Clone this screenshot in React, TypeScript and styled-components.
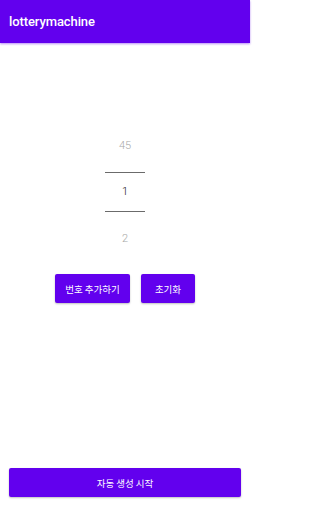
import React from "react";
import styled, { createGlobalStyle } from "styled-components";

const Global = createGlobalStyle`
  html, body { margin: 0; padding: 0; background: #ffffff; }
  body { font-family: Roboto, "Noto Sans CJK KR", sans-serif; }
  #root { width: 250px; height: 512px; }
`;

const Screen = styled.div`
  width: 250px;
  height: 512px;
  display: flex;
  flex-direction: column;
  background: #ffffff;
`;

const AppBar = styled.header`
  height: 43px;
  flex: none;
  background: #6200ee;
  display: flex;
  align-items: center;
  padding-left: 9px;
  box-shadow: 0 1px 2px rgba(98, 0, 238, 0.45);
`;

const Title = styled.h1`
  margin: 0;
  font-family: Roboto, sans-serif;
  font-weight: 500;
  font-size: 13px;
  color: #ffffff;
  letter-spacing: -0.1px;
`;

const Main = styled.main`
  flex: 1;
  display: flex;
  flex-direction: column;
  align-items: center;
  padding-top: 83px;
`;

const Picker = styled.div`
  width: 40px;
  display: flex;
  flex-direction: column;
  align-items: stretch;
`;

const PickerItem = styled.div<{ $selected?: boolean; $h: number; $mt?: number }>`
  height: ${(p) => p.$h}px;
  margin-top: ${(p) => p.$mt ?? 0}px;
  line-height: ${(p) => p.$h}px;
  text-align: center;
  font-family: Roboto, sans-serif;
  font-size: 11px;
  font-weight: 300;
  color: ${(p) => (p.$selected ? "#222222" : "#a8a8a8")};
`;

const Divider = styled.div<{ $mt?: number }>`
  height: 1px;
  margin-top: ${(p) => p.$mt ?? 0}px;
  background: #6b6b6b;
`;

const ButtonRow = styled.div`
  display: flex;
  gap: 11px;
  margin-top: 15px;
`;

const PurpleButton = styled.button<{ $w: number }>`
  width: ${(p) => p.$w}px;
  height: 29px;
  border: none;
  border-radius: 2px;
  background: #6200ee;
  color: #ffffff;
  font-family: "Noto Sans CJK KR", Roboto, sans-serif;
  font-size: 9.5px;
  padding: 0;
  box-shadow: 0 1px 2px rgba(0, 0, 0, 0.25);
  display: flex;
  align-items: center;
  justify-content: center;
`;

const Footer = styled.footer`
  flex: none;
  padding: 0 9px 15px;
  display: flex;
`;

export default function App() {
  return (
    <>
      <Global />
      <Screen>
        <AppBar>
          <Title>lotterymachine</Title>
        </AppBar>
        <Main>
          <Picker>
            <PickerItem $h={40}>45</PickerItem>
            <Divider $mt={6} />
            <PickerItem $selected $h={38}>1</PickerItem>
            <Divider />
            <PickerItem $h={40} $mt={7}>2</PickerItem>
          </Picker>
          <ButtonRow>
            <PurpleButton $w={75}>번호 추가하기</PurpleButton>
            <PurpleButton $w={54}>초기화</PurpleButton>
          </ButtonRow>
        </Main>
        <Footer>
          <PurpleButton $w={232}>자동 생성 시작</PurpleButton>
        </Footer>
      </Screen>
    </>
  );
}
